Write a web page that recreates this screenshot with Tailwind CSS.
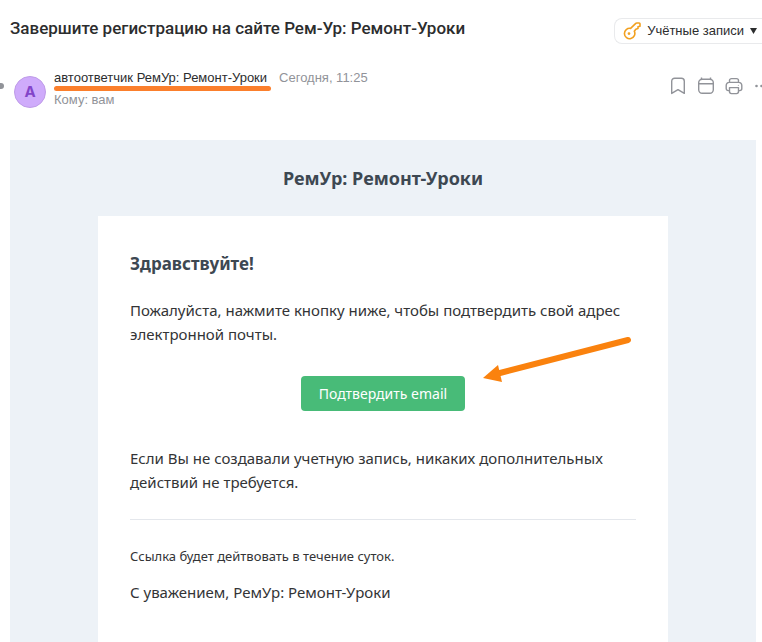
<!DOCTYPE html>
<html lang="ru">
<head>
  <meta charset="UTF-8" />
  <meta name="viewport" content="width=device-width, initial-scale=1.0"/>
  <title>Завершите регистрацию на сайте Рем-Ур: Ремонт-Уроки</title>
  <script src="https://cdn.jsdelivr.net/npm/@tailwindcss/browser@4"></script>
</head>
<body class="bg-white min-h-screen flex flex-col overflow-hidden font-['Liberation_Sans',sans-serif] text-[#2c2d2e]">
  <header class="pl-2.5">
    <div class="flex items-start justify-between pt-[18px]">
      <h1 class="font-['Roboto',sans-serif] text-[17px] leading-5 font-medium whitespace-nowrap">Завершите регистрацию на сайте Рем-Ур: Ремонт-Уроки</h1>
      <button type="button" class="flex items-center shrink-0 h-[26px] pl-2 pr-[5px] gap-1.5 border border-r-0 border-[#e9eaec] rounded-l-lg text-[13px] whitespace-nowrap">
        <svg class="size-[18px]" viewBox="0 0 18 18" fill="none" stroke="#f2a01f" stroke-width="1.6" stroke-linejoin="round" stroke-linecap="round">
          <path d="M7.6 6.4 12.8 1.4Q13.2 1 13.8 1H16.2Q17 1 17 1.8V4.2L15 4.8V6.6L12.8 7.2 11.3 9.2A5.2 5.2 0 1 1 7.6 6.4Z"/>
          <circle cx="6" cy="11.6" r="0.6" fill="#f2a01f"/>
        </svg>
        Учётные записи
        <svg class="w-[7px] h-[6px]" viewBox="0 0 7 6" fill="#2c2d2e"><path d="M0 0H7L3.5 6Z"/></svg>
      </button>
    </div>

    <div class="flex items-start pt-6">
      <span class="size-1.5 rounded-full bg-[#919399] -ml-3 mt-[15px] mr-2.5 shrink-0"></span>
      <div class="size-8 mt-2 shrink-0 rounded-full bg-[#cfabfb] border border-[#bf9ce8] flex items-center justify-center font-['Inter',sans-serif] text-[15px] font-bold text-[#8344c9]">А</div>
      <div class="ml-2 pt-0.5 flex-1 text-[13px]">
        <div class="flex gap-3 leading-4">
          <span class="relative whitespace-nowrap">автоответчик РемУр: Ремонт-Уроки
            <span class="absolute left-0 -right-1 top-4 h-[5px] rounded-full bg-[#fb7f2c]"></span>
          </span>
          <span class="text-[#919399]">Сегодня, 11:25</span>
        </div>
        <div class="leading-4 mt-1.5 text-[#919399]">Кому: вам</div>
      </div>
      <div class="flex gap-2.5 mt-[9px] shrink-0 text-[#919399]">
        <button type="button" aria-label="Закладка">
          <svg class="size-[18px]" viewBox="0 0 18 18" fill="none" stroke="currentColor" stroke-width="1.4" stroke-linejoin="round"><path d="M2.7 16.4V4.2a3 3 0 0 1 3-3h6.6a3 3 0 0 1 3 3v12.2L9 12.6Z"/></svg>
        </button>
        <button type="button" aria-label="Календарь">
          <svg class="size-[18px]" viewBox="0 0 18 18" fill="none" stroke="currentColor" stroke-width="1.4"><rect x="1.7" y="2.2" width="14.6" height="14" rx="3.5"/><path d="M1.7 6.7H16.3M4.5 0.4V2.4M13.5 0.4V2.4"/></svg>
        </button>
        <button type="button" aria-label="Печать">
          <svg class="size-[18px]" viewBox="0 0 18 18" fill="none" stroke="currentColor" stroke-width="1.4" stroke-linejoin="round"><path d="M4.5 5.4V3.6a2 2 0 0 1 2-2h5a2 2 0 0 1 2 2V5.4M4.5 13.6H3.2A2 2 0 0 1 1.2 11.6V8.4a3 3 0 0 1 3-3h9.6a3 3 0 0 1 3 3v3.2a2 2 0 0 1-2 2H13.5M4.5 10.6h9v4a2 2 0 0 1-2 2h-5a2 2 0 0 1-2-2Z"/><circle cx="13.3" cy="8.2" r=".5" fill="currentColor" stroke="none"/></svg>
        </button>
        <button type="button" aria-label="Ещё" class="w-[9px] overflow-hidden">
          <svg class="w-[18px] h-[18px]" viewBox="0 0 18 18" fill="currentColor"><circle cx="3.5" cy="9" r="1.3"/><circle cx="8.5" cy="9" r="1.3"/><circle cx="13.5" cy="9" r="1.3"/></svg>
        </button>
      </div>
    </div>
  </header>

  <main class="ml-2.5 mr-1.5 mt-8 flex-1 flex flex-col items-center bg-[#edf2f7] font-['Noto_Sans',sans-serif] text-[#333436]">
    <h2 class="py-[26px] text-lg leading-6 font-bold text-[#3d4852]">РемУр: Ремонт-Уроки</h2>

    <article class="w-full max-w-[570px] flex-1 bg-white px-8 pt-9 text-[15px] leading-6">
      <h3 class="text-[17px] font-bold text-[#3d4852]">Здравствуйте!</h3>
      <p class="mt-[22px]">Пожалуйста, нажмите кнопку ниже, чтобы подтвердить свой адрес электронной почты.</p>

      <div class="relative flex justify-center mt-[30px]">
        <button type="button" class="h-[35px] px-[18px] rounded bg-[#48bb78] text-white text-sm">Подтвердить email</button>
        <!-- arrow to the button -->
        <svg class="absolute right-1 -top-10 w-[150px] h-[50px]" viewBox="0 0 150 50">
          <path d="M18 37 146 4" stroke="#fa820e" stroke-width="6" stroke-linecap="round"/>
          <path d="M1 42 16 29 20 46Z" fill="#fa820e"/>
        </svg>
      </div>

      <p class="mt-[35px]">Если Вы не создавали учетную запись, никаких дополнительных действий не требуется.</p>

      <hr class="mt-[25px] border-[#e4e7ec]"/>

      <p class="mt-6 text-[13px]">Ссылка будет дейтвовать в течение суток.</p>
      <p class="mt-3">С уважением, РемУр: Ремонт-Уроки</p>
    </article>
  </main>
</body>
</html>
